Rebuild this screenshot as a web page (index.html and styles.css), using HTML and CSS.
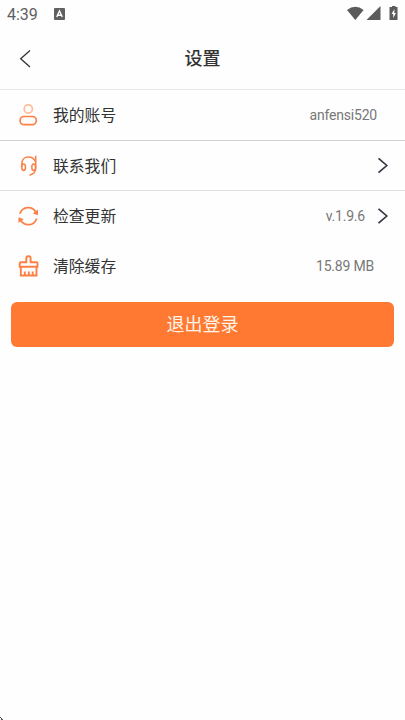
FILE: index.html
```html
<!DOCTYPE html>
<html lang="zh-CN">
<head>
<meta charset="utf-8">
<title>设置</title>
<link rel="stylesheet" href="styles.css">
</head>
<body>
<div class="status">
  <span class="time">4:39</span>
  <svg class="keyboard" width="11" height="12" viewBox="0 0 11 12"><rect width="11" height="12" rx="1" fill="#606060"/><path d="M2.700 9 5.500 3 8.300 9M3.700 7.200h3.600" fill="none" stroke="#fff" stroke-width="1.400"/></svg>
  <svg class="signals" width="52" height="16" viewBox="0 0 52 16" fill="#5b5b5b"><path d="M0 4Q8.300-2.600 16.600 4L8.300 14Z"/><path d="M33.500 0V14H19.500Z"/><path d="M44 1H45V0H48.500V1H50.500V14H42.500V1Z"/><path d="M47.500 3 44.500 8H46.200V12L49 7H47.300Z" fill="#fff"/></svg>
</div>
<header class="header">
  <svg class="back" width="14" height="20" viewBox="0 0 14 20"><path d="M11 1.500 1.700 9.800 11 18"/></svg>
  <h1>设置</h1>
</header>
<main>
  <div class="row row-account">
    <svg class="icon" width="24" height="24" viewBox="0 0 24 24"><circle cx="12.300" cy="6" r="4.100" stroke="#ffbd98"/><rect x="4.100" y="13.500" width="16.200" height="8.200" rx="4"/></svg>
    <span class="label">我的账号</span>
    <span class="value account">anfensi520</span>
  </div>
  <div class="row row-contact">
    <svg class="icon" width="24" height="24" viewBox="0 0 24 24"><path d="M5.900 13V9.500C5.900 5.500 8.500 3 12.300 3C15.500 3 18.300 4.800 19.300 7.500M19.700 1.800V14.500Q19.500 19.500 13.500 21.200"/><ellipse cx="7.600" cy="13.200" rx="1.900" ry="3.200"/><ellipse cx="17.700" cy="13.200" rx="1.900" ry="3.200"/></svg>
    <span class="label">联系我们</span>
    <svg class="chevron" width="12" height="18" viewBox="0 0 12 18"><path d="M1.500 1.300 9.800 8.500 1.500 15.700"/></svg>
  </div>
  <div class="row row-update">
    <svg class="icon" width="24" height="24" viewBox="0 0 24 24"><path d="M3.900 9.800C6.500 1.800 16.500 1.600 20 8.500M4.500 16C8.500 22.700 18 22.300 20.700 14.500"/><path class="solid" d="M22 5.500V11.300L16.800 9.400ZM2.500 13.200 7.800 15.200 2.500 19Z"/></svg>
    <span class="label">检查更新</span>
    <span class="value version">v.1.9.6</span>
    <svg class="chevron" width="12" height="18" viewBox="0 0 12 18"><path d="M1.500 1.800 9.800 9 1.500 16.200"/></svg>
  </div>
  <div class="row row-cache">
    <svg class="icon" width="24" height="24" viewBox="0 0 24 24"><path d="M10.300 8.200V4.200Q10.300 2.300 12.300 2.300H12.800Q14.600 2.300 14.600 4.200V8.200H20.300Q21.500 8.200 21.500 9.400V12.800H3.700V9.400Q3.700 8.200 4.900 8.200ZM4.800 12.800V21.500H20.500V12.800M8.800 21.500V17.500M12.800 21.500V17.500M16.700 21.500V17.500"/></svg>
    <span class="label">清除缓存</span>
    <span class="value cache">15.89 MB</span>
  </div>
  <button class="logout">退出登录</button>
</main>
<svg class="corner" width="4" height="4" viewBox="0 0 4 4"><path d="M0 1h1v1H0zM1 2h1v1h1v1H1z" fill="#555"/></svg>
</body>
</html>
```
FILE: styles.css
```css
* { box-sizing: border-box; }
body {
  margin: 0;
  height: 720px;
  display: flex;
  flex-direction: column;
  overflow: hidden;
  background: #fefefe;
  color: #333;
  font-family: Roboto, "Noto Sans CJK SC", sans-serif;
}
svg { display: block; flex: none; }
.status {
  height: 28px;
  display: flex;
  align-items: center;
  padding: 0 7px;
}
.time { width: 47px; font-size: 16px; line-height: 28px; padding-top: 1px; color: #606060; }
.signals { margin-left: auto; margin-right: -1px; }
.header {
  height: 62px;
  display: grid;
  grid-template-columns: 60px 1fr 60px;
  align-items: center;
  border-bottom: 1px solid #e6e6e6;
}
.back { margin-left: 19px; }
.back path, .chevron path { fill: none; stroke: #333; stroke-width: 1.3; }
.chevron path { stroke: #333340; stroke-width: 1.6; }
h1 { margin: 0; text-align: center; font-size: 18px; line-height: 26px; padding-top: 1px; font-weight: 500; }
.row {
  height: 50px;
  display: flex;
  align-items: center;
  padding: 0 16px;
}
.row-account { height: 51px; border-bottom: 1px solid #d2d2d2; }
.row-contact { border-bottom: 1px solid #e2e2e4; }
.icon { fill: none; stroke: #fb8045; stroke-width: 1.7; }
.row-contact .icon { stroke-width: 1.5; }
.row-cache .icon { stroke-width: 1.9; }
.icon .solid { fill: #fb8045; stroke: none; }
.label { margin-left: 13px; font-size: 15.8px; line-height: 24px; padding-top: 2px; }
.value { margin-left: auto; font-size: 14px; letter-spacing: -0.2px; line-height: 20px; color: #777; }
.account { margin-right: 12px; }
.version { margin-right: 12px; }
.cache { margin-right: 15px; }
.row-contact .chevron { margin-left: auto; }
.logout {
  display: block;
  width: 383px;
  height: 45px;
  margin: 11px 0 0 11px;
  padding: 0;
  border: 0;
  border-radius: 6px;
  background: #ff7933;
  color: #fff4e8;
  font: 400 18px/44px Roboto, "Noto Sans CJK SC", sans-serif;
}
.corner { margin-top: auto; }
```
